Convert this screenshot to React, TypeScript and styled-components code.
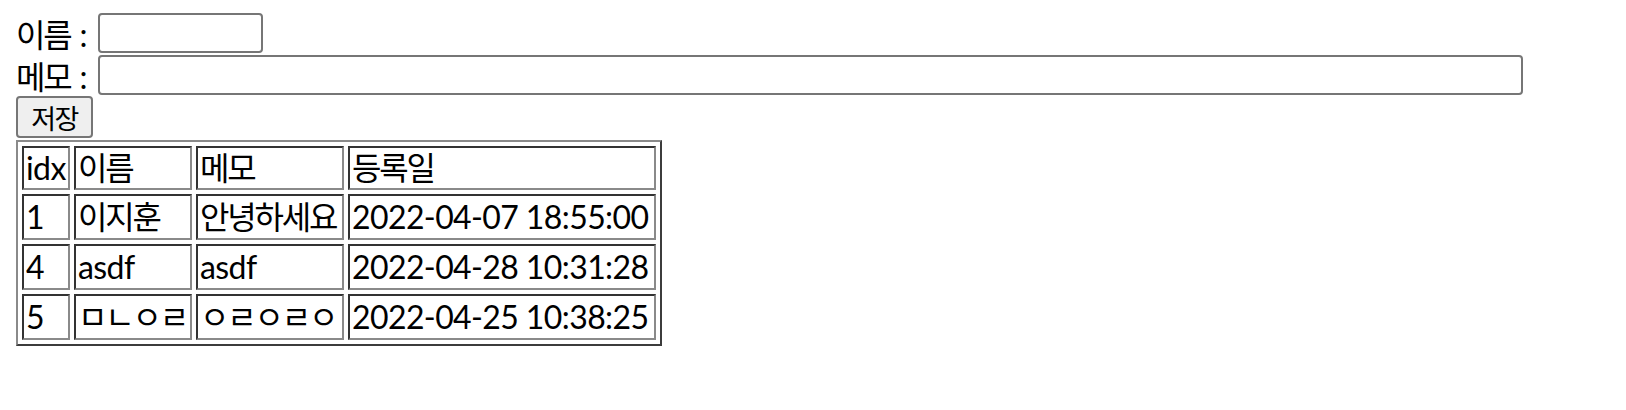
import React from "react";
import styled, { createGlobalStyle } from "styled-components";

const GlobalStyle = createGlobalStyle`
  html, body { margin: 0; padding: 0; background: #ffffff; }
  body {
    font-family: "Lato", "Noto Sans CJK KR", sans-serif;
    color: #000000;
  }
`;

const Page = styled.div`
  padding: 12px 16px 0 16px;
  display: flex;
  flex-direction: column;
  align-items: flex-start;
`;

const FieldRow = styled.div`
  display: flex;
  align-items: center;
  height: 42px;
`;

const Label = styled.span`
  font-family: "Lato", "Noto Sans CJK KR", sans-serif;
  font-size: 32px;
  letter-spacing: -2.2px;
  word-spacing: 3px;
  width: 82px;
  white-space: pre;
`;

const TextInput = styled.input<{ $w: number }>`
  box-sizing: border-box;
  width: ${(p) => p.$w}px;
  height: 40px;
  border: 2px solid #767676;
  border-radius: 4px;
  background: #ffffff;
  padding: 2px 4px;
  font-size: 26px;
  outline: none;
`;

const SaveButton = styled.button`
  box-sizing: border-box;
  height: 42px;
  width: 77px;
  margin: 0;
  padding: 0 10px;
  background: #efefef;
  border: 2px solid #767676;
  border-radius: 4px;
  font-family: "Noto Sans CJK KR", sans-serif;
  font-size: 27px;
  letter-spacing: -1.5px;
  color: #000000;
  display: flex;
  align-items: center;
  justify-content: center;
`;

const Table = styled.table`
  margin-top: 2px;
  border-collapse: separate;
  border-spacing: 4px;
  border-style: solid;
  border-width: 2px;
  border-color: #8a8a8a #3c3c3c #3c3c3c #8a8a8a;
`;

const Cell = styled.td<{ $w?: number; $h: number; $ko?: boolean }>`
  box-sizing: border-box;
  ${(p) => (p.$w ? `width: ${p.$w}px;` : "")}
  height: ${(p) => p.$h}px;
  padding: 0 2px;
  border-style: solid;
  border-width: 2px;
  border-color: #333333 #8a8a8a #8a8a8a #333333;
  text-align: left;
  vertical-align: middle;
  font-weight: normal;
  white-space: nowrap;
  font-size: 32px;
  letter-spacing: ${(p) => (p.$ko ? "-2.2px" : "-0.6px")};
  line-height: 1;
`;

const HeadCell = styled(Cell).attrs({ as: "th" })``;

const widths = [48, 118, 148, 308];
const headers = ["idx", "이름", "메모", "등록일"];

type Row = { idx: string; name: string; memo: string; date: string };
const rows: Row[] = [
  { idx: "1", name: "이지훈", memo: "안녕하세요", date: "2022-04-07 18:55:00" },
  { idx: "4", name: "asdf", memo: "asdf", date: "2022-04-28 10:31:28" },
  { idx: "5", name: "ㅁㄴㅇㄹ", memo: "ㅇㄹㅇㄹㅇ", date: "2022-04-25 10:38:25" },
];

const isKo = (s: string) => /[\u3131-\uD7A3]/.test(s);

export default function App() {
  return (
    <>
      <GlobalStyle />
      <Page>
        <FieldRow>
          <Label>이름 :</Label>
          <TextInput $w={165} type="text" />
        </FieldRow>
        <FieldRow>
          <Label>메모 :</Label>
          <TextInput $w={1425} type="text" />
        </FieldRow>
        <SaveButton>저장</SaveButton>
        <Table>
          <thead>
            <tr>
              {headers.map((h, i) => (
                <HeadCell key={h} $w={widths[i]} $h={44} $ko={isKo(h)}>
                  {h}
                </HeadCell>
              ))}
            </tr>
          </thead>
          <tbody>
            {rows.map((r) => (
              <tr key={r.idx}>
                {[r.idx, r.name, r.memo, r.date].map((v, i) => (
                  <Cell key={i} $h={46} $ko={isKo(v)}>
                    {v}
                  </Cell>
                ))}
              </tr>
            ))}
          </tbody>
        </Table>
      </Page>
    </>
  );
}
